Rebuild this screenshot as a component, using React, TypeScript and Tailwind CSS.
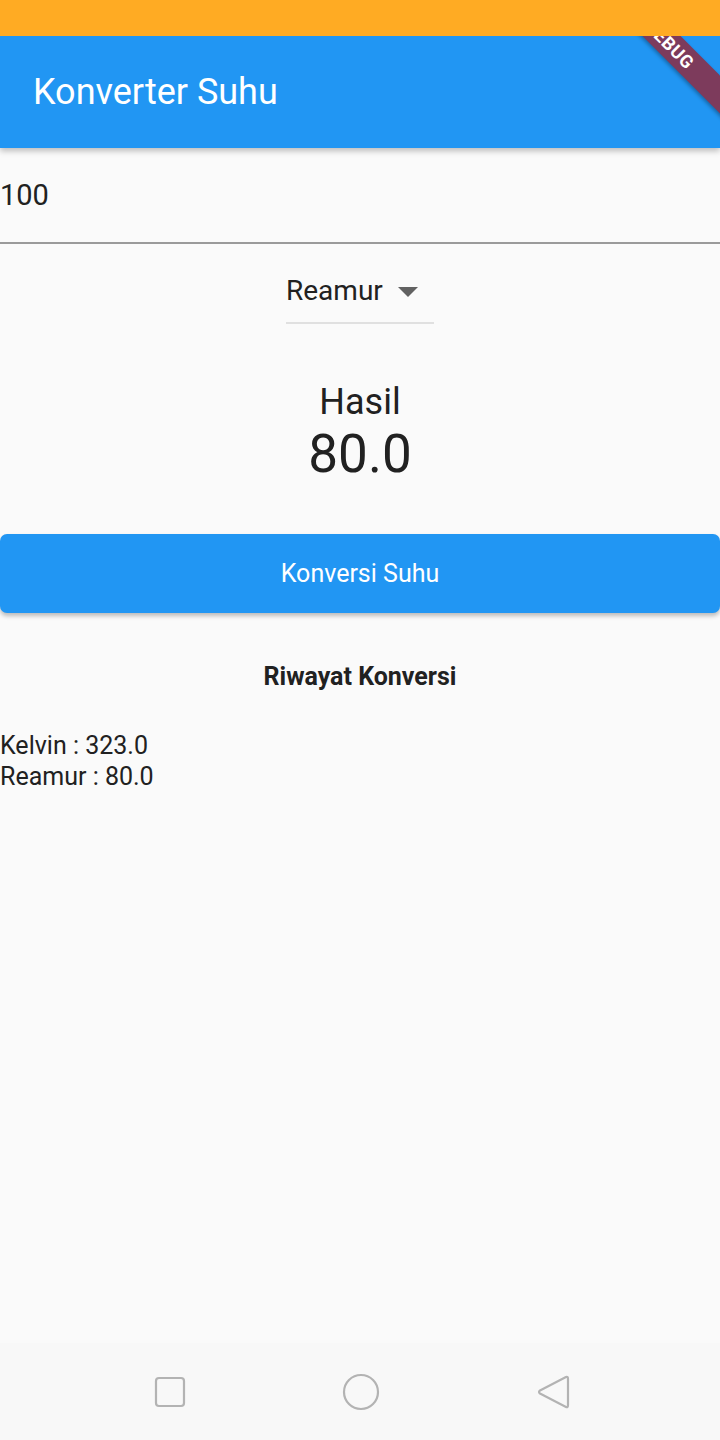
import React from "react";

export default function App() {
  const font = { fontFamily: "Roboto, 'Noto Sans', sans-serif" };
  return (
    <div className="relative w-[720px] h-[1440px] bg-[#fafafa] overflow-hidden flex flex-col" style={font}>
      {/* status bar */}
      <div className="relative z-20 h-[36px] bg-[#ffab23] shrink-0" />
      {/* app bar */}
      <div className="relative z-10 h-[112px] bg-[#2196f3] shrink-0 flex items-center pl-[33px] shadow-[0_3px_6px_rgba(0,0,0,0.25)]">
        <span className="text-white text-[36px] leading-none">Konverter Suhu</span>
      </div>
      {/* debug banner */}
      <div className="absolute z-[15] left-[570px] top-[31px] w-[200px] h-[27px] rotate-45 bg-[#7d3b5c] flex items-center justify-center shadow-[0_2px_4px_rgba(0,0,0,0.3)]">
        <span className="text-white font-bold text-[18px] leading-none tracking-[0.5px]">DEBUG</span>
      </div>

      {/* input */}
      <div className="h-[96px] flex flex-col justify-end">
        <div className="flex-1 flex items-center">
          <span className="text-[29px] leading-none text-[#212121]">100</span>
        </div>
        <div className="h-[2px] bg-[#9a9a9a]" />
      </div>

      {/* dropdown */}
      <div className="flex justify-center pt-[19px]">
        <div className="w-[148px] flex flex-col">
          <div className="flex items-center h-[59px] pb-[4px]">
            <span className="text-[28px] leading-none text-[#212121]">Reamur</span>
            <svg className="ml-[15px] mt-[2px]" width="20" height="10" viewBox="0 0 20 10">
              <polygon points="0,0 20,0 10,10" fill="#616161" />
            </svg>
          </div>
          <div className="h-[2px] bg-[#e0e0e0]" />
        </div>
      </div>

      {/* result */}
      <div className="flex flex-col items-center mt-[56px]">
        <span className="text-[36px] leading-[44px] text-[#212121]">Hasil</span>
        <span className="text-[53px] leading-[60px] text-[#212121]">80.0</span>
      </div>

      {/* button */}
      <div className="mt-[50px] h-[79px] bg-[#2196f3] rounded-[7px] flex items-center justify-center shadow-[0_3px_4px_rgba(0,0,0,0.25)]">
        <span className="text-white text-[25px] leading-none">Konversi Suhu</span>
      </div>

      {/* riwayat */}
      <div className="mt-[49px] flex justify-center">
        <span className="text-[25px] font-bold leading-[30px] text-[#212121]">Riwayat Konversi</span>
      </div>
      <div className="mt-[38px] flex flex-col text-[25px] leading-[31px] text-[#212121]">
        <span>Kelvin : 323.0</span>
        <span>Reamur : 80.0</span>
      </div>

      <div className="flex-1" />

      {/* nav bar */}
      <div className="h-[97px] bg-[#f8f8f8] flex items-center justify-between shrink-0 pl-[154px] pr-[150px]">
        <svg width="32" height="32" viewBox="0 0 32 32">
          <rect x="2" y="2" width="28" height="28" rx="3" fill="none" stroke="#b3b3b3" strokeWidth="2.2" />
        </svg>
        <svg width="38" height="38" viewBox="0 0 38 38">
          <circle cx="19" cy="19" r="17" fill="none" stroke="#b3b3b3" strokeWidth="2.2" />
        </svg>
        <svg width="34" height="36" viewBox="0 0 34 36">
          <path d="M30 3 Q32 2 32 5 L32 31 Q32 34 30 33 L4 19.5 Q2 18 4 16.5 Z" fill="none" stroke="#b3b3b3" strokeWidth="2.2" strokeLinejoin="round" />
        </svg>
      </div>
    </div>
  );
}
